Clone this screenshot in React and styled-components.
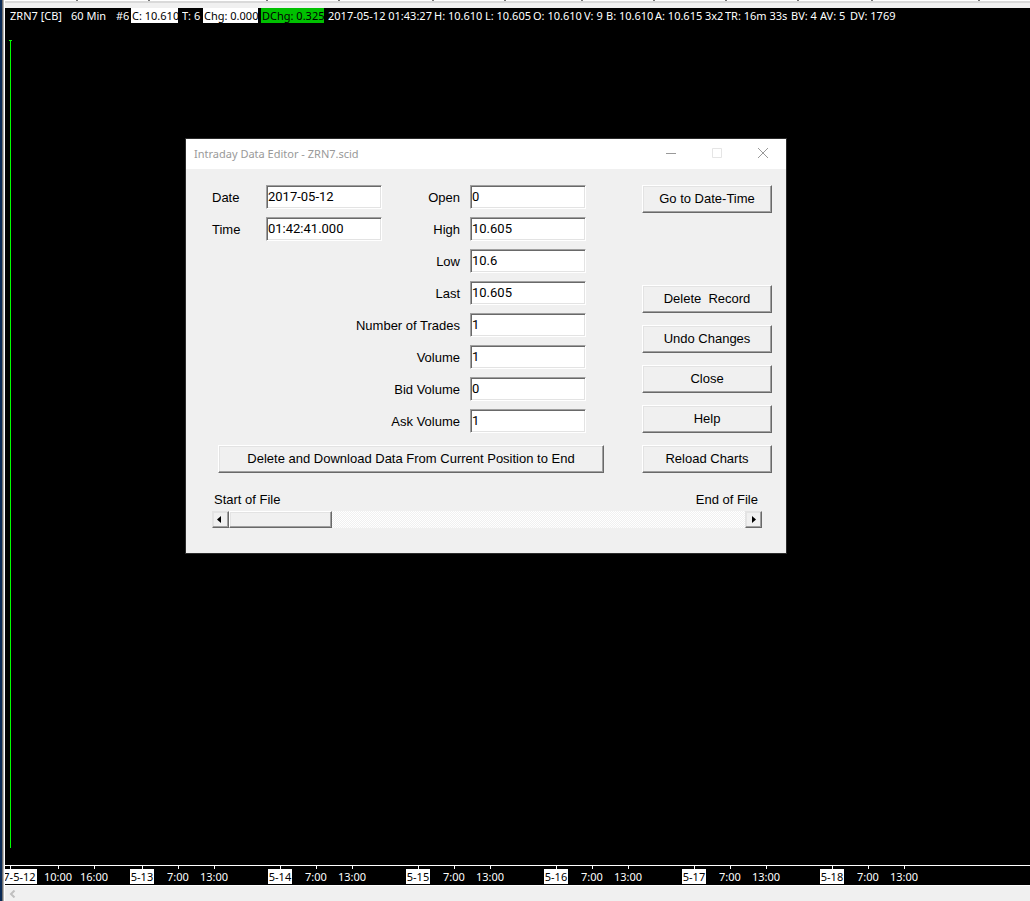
import React from "react";
import styled, { createGlobalStyle, css } from "styled-components";

const GlobalStyle = createGlobalStyle`
  * {
    box-sizing: border-box;
  }

  body {
    margin: 0;
    background: #f0f0f0;
    overflow: hidden;
  }
`;

const uiFont = css`
  font-family: "Noto Sans", "Open Sans", sans-serif;
  font-size: 11px;
`;

const dialogFont = css`
  font-family: "Liberation Sans", Arial, sans-serif;
  font-size: 13px;
`;

const Page = styled.main`
  display: flex;
  min-height: 100vh;
  ${uiFont}
`;

const DesktopEdge = styled.div`
  flex: none;
  width: 4px;
  background: linear-gradient(90deg, #0b2b56 2px, #6f6f6f 2px, #6f6f6f 3px, #b4b4b4 3px);
`;

const ChartWindow = styled.section`
  flex: 1;
  min-width: 0;
  display: flex;
  flex-direction: column;
  border-left: 1px solid #fff;
`;

const ToolbarEdge = styled.div`
  flex: none;
  height: 8px;
  background: linear-gradient(#fff 1px, #d9d9d9 1px, #d9d9d9 3px, #f0f0f0 3px);
`;

const ToolbarMarks = styled.div`
  display: flex;
  height: 1px;
  overflow: hidden;
`;

const ToolbarCell = styled.div`
  flex: none;
  width: ${(p) => p.$width}px;
  border-right: 2px solid #777;
`;

const Chart = styled.div`
  position: relative;
  flex: 1;
  display: flex;
  flex-direction: column;
  background: #000;
  color: #fff;
`;

const QuoteLine = styled.header`
  display: flex;
  height: 15px;
  padding-left: 5px;
  line-height: 15px;
  white-space: pre;
  overflow: hidden;
`;

const Quote = styled.span`
  flex: none;
  width: ${(p) => p.$width}px;
  margin-right: ${(p) => p.$gap || 3}px;
  padding-left: ${(p) => (p.$bg ? 1 : 0)}px;
  overflow: hidden;
  color: ${(p) => (p.$bg ? "#000" : "#fff")};
  background: ${(p) => p.$bg || "transparent"};
`;

const Plot = styled.div`
  flex: 1;
  padding: 17px 4px;
`;

const PriceBar = styled.div`
  width: 3px;
  height: 100%;
  min-height: 100%;
  background: linear-gradient(#00ff00, #00ff00) top / 3px 1px no-repeat,
    linear-gradient(#00ff00, #00ff00) center / 1px 100% no-repeat;
`;

const TimeAxis = styled.footer`
  flex: none;
  display: flex;
  height: 20px;
  border-top: 1px solid #fff;
  overflow: hidden;
`;

const Day = styled.div`
  flex: none;
  display: flex;
  width: ${(p) => (p.$first ? 132 : 138)}px;
  margin-left: ${(p) => (p.$first ? -13 : 0)}px;
`;

const TickCell = styled.div`
  flex: none;
  display: flex;
  flex-direction: column;
  align-items: center;
  width: 36px;
  margin-right: ${(p) => (p.$wide ? 12 : 0)}px;
`;

const Tick = styled.i`
  width: 1px;
  height: 3px;
  background: #fff;
`;

const TickLabel = styled.time`
  padding: 0 1px;
  line-height: 15px;
  white-space: nowrap;
  color: ${(p) => (p.$day ? "#000" : "#fff")};
  background: ${(p) => (p.$day ? "#fff" : "transparent")};
`;

const BottomScroll = styled.div`
  flex: none;
  height: 16px;
  border-top: 1px solid #fff;
  background: #f0f0f0;
`;

const ScrollLeft = styled.button`
  display: flex;
  align-items: center;
  justify-content: center;
  width: 15px;
  height: 15px;
  padding: 0;
  border: 0;
  background: none;
  color: #bfbfbf;
`;

const Dialog = styled.section`
  position: absolute;
  left: 180px;
  top: 130px;
  width: 602px;
  border: 1px solid #2b2b2b;
  background: #f0f0f0;
  color: #000;
  ${dialogFont}
`;

const TitleBar = styled.header`
  display: flex;
  align-items: flex-start;
  justify-content: space-between;
  height: 30px;
  padding-left: 8px;
  background: #fff;
  color: #999;
  ${uiFont}
`;

const Title = styled.h1`
  margin: 0;
  font-size: 11px;
  font-weight: 400;
  line-height: 29px;
`;

const WindowButton = styled.button`
  width: 46px;
  height: 28px;
  padding: 0;
  border: 0;
  background: none;
  color: ${(p) => (p.disabled ? "#e5e5e5" : "#999")};

  svg {
    display: block;
    margin: auto;
  }
`;

const WindowButtons = styled.div`
  display: flex;
`;

const Body = styled.form`
  padding: 16px 14px 25px 26px;
`;

const Columns = styled.div`
  display: flex;
  justify-content: space-between;
`;

const Fields = styled.div`
  display: flex;
`;

const FieldColumn = styled.div`
  display: grid;
  grid-template-columns: ${(p) => p.$labelWidth}px 116px;
  row-gap: 8px;
  align-content: start;
`;

/* right-aligned labels may run out past the left of their column */
const Label = styled.label`
  display: flex;
  justify-content: ${(p) => (p.$right ? "flex-end" : "flex-start")};
  height: 24px;
  padding-right: 10px;
  line-height: 26px;
  white-space: nowrap;
`;

const TextBox = styled.input`
  width: 100%;
  height: 24px;
  padding: 0 1px 2px;
  border: 1px solid;
  border-color: #a0a0a0 #fff #fff #a0a0a0;
  border-radius: 0;
  box-shadow: inset 1px 1px #696969, inset -1px -1px #e3e3e3;
  background: #fff;
  outline: none;
  font-family: Roboto, "Liberation Sans", sans-serif;
  font-size: 13px;
`;

const raised = css`
  border: 1px solid;
  border-color: #fff #696969 #696969 #fff;
  box-shadow: inset -1px -1px #a0a0a0, inset 1px 1px #e3e3e3;
  background: #f0f0f0;
`;

const PushButton = styled.button`
  width: ${(p) => (p.$wide ? "386px" : "100%")};
  height: 28px;
  padding: 0 0 2px;
  white-space: pre;
  color: #000;
  ${dialogFont}
  ${raised}
`;

const Actions = styled.div`
  display: flex;
  flex-direction: column;
  gap: 12px;
  width: 130px;
`;

const WideAction = styled.div`
  padding: 12px 6px 0;
`;

const ActionGap = styled.div`
  height: 48px;
`;

const Ends = styled.div`
  display: flex;
  justify-content: space-between;
  margin-top: 18px;
  padding: 0 14px 0 2px;
  line-height: 17px;
`;

const ScrollBar = styled.div`
  display: flex;
  height: 17px;
  margin: 3px 10px 0 0;
  background: repeating-conic-gradient(#fff 0 25%, #f0f0f0 0 50%) 0 0 / 2px 2px;
`;

const ArrowButton = styled.button`
  display: flex;
  align-items: center;
  justify-content: center;
  width: 17px;
  height: 17px;
  margin-left: ${(p) => (p.$end ? "auto" : 0)};
  padding: ${(p) => (p.$end ? 0 : "0 3px 0 0")};
  color: #000;
  ${raised}
  border-left-color: #e3e3e3;
  border-top-color: #e3e3e3;
`;

const Thumb = styled.div`
  width: 103px;
  ${raised}
`;

const toolbarCells = [73, 72, 118, 72, 94, 72, 77, 72, 72, 72, 74, 107];

const quotes = [
  { text: "ZRN7 [CB]", width: 56, gap: 5 },
  { text: "60 Min", width: 37, gap: 8 },
  { text: "#6", width: 13, gap: 2 },
  { text: "C: 10.610", width: 47, gap: 4, bg: "#fff" },
  { text: "T: 6", width: 19, gap: 2 },
  { text: "Chg: 0.000", width: 55, bg: "#fff" },
  { text: "DChg: 0.325", width: 63, gap: 4, bg: "#00c000" },
  { text: "2017-05-12 01:43:27", width: 104, gap: 2 },
  { text: "H: 10.610", width: 49, gap: 2 },
  { text: "L: 10.605", width: 46, gap: 2 },
  { text: "O: 10.610", width: 49, gap: 2 },
  { text: "V: 9", width: 20, gap: 2 },
  { text: "B: 10.610", width: 48, gap: 1 },
  { text: "A: 10.615", width: 48, gap: 2 },
  { text: "3x2", width: 18, gap: 2 },
  { text: "TR: 16m 33s", width: 64, gap: 2 },
  { text: "BV: 4", width: 27, gap: 2 },
  { text: "AV: 5", width: 28, gap: 2 },
  { text: "DV: 1769", width: 46 },
];

const days = [
  ["2017-5-12", "10:00", "16:00"],
  ["5-13", "7:00", "13:00"],
  ["5-14", "7:00", "13:00"],
  ["5-15", "7:00", "13:00"],
  ["5-16", "7:00", "13:00"],
  ["5-17", "7:00", "13:00"],
  ["5-18", "7:00", "13:00"],
];

const whenFields = [
  ["Date", "2017-05-12"],
  ["Time", "01:42:41.000"],
];

const valueFields = [
  ["Open", "0"],
  ["High", "10.605"],
  ["Low", "10.6"],
  ["Last", "10.605"],
  ["Number of Trades", "1"],
  ["Volume", "1"],
  ["Bid Volume", "0"],
  ["Ask Volume", "1"],
];

const actions = ["Delete  Record", "Undo Changes", "Close", "Help", "Reload Charts"];

function FieldList({ fields, labelWidth, right }) {
  return (
    <FieldColumn $labelWidth={labelWidth}>
      {fields.map(([name, value]) => {
        const id = name.toLowerCase().replace(/ /g, "-");
        return (
          <React.Fragment key={id}>
            <Label htmlFor={id} $right={right}>{name}</Label>
            <TextBox id={id} type="text" defaultValue={value} />
          </React.Fragment>
        );
      })}
    </FieldColumn>
  );
}

function DataEditor() {
  return (
    <Dialog role="dialog" aria-labelledby="editor-title">
      <TitleBar>
        <Title id="editor-title">Intraday Data Editor - ZRN7.scid</Title>
        <WindowButtons>
          <WindowButton aria-label="Minimize">
            <svg width="10" height="10"><path d="M0 5.5h10" stroke="currentColor" /></svg>
          </WindowButton>
          <WindowButton aria-label="Maximize" disabled>
            <svg width="10" height="10"><path d="M.5.5h9v9h-9z" fill="none" stroke="currentColor" /></svg>
          </WindowButton>
          <WindowButton aria-label="Close window">
            <svg width="10" height="10"><path d="M0 0l10 10M10 0L0 10" stroke="currentColor" /></svg>
          </WindowButton>
        </WindowButtons>
      </TitleBar>
      <Body onSubmit={(e) => e.preventDefault()}>
        <Columns>
          <div>
            <Fields>
              <FieldList fields={whenFields} labelWidth={54} />
              <FieldList fields={valueFields} labelWidth={88} right />
            </Fields>
            <WideAction>
              <PushButton type="button" $wide>
                Delete and Download Data From Current Position to End
              </PushButton>
            </WideAction>
          </div>
          <Actions>
            <PushButton type="button">Go to Date-Time</PushButton>
            <ActionGap />
            {actions.map((name) => (
              <PushButton type="button" key={name}>{name}</PushButton>
            ))}
          </Actions>
        </Columns>
        <Ends>
          <span>Start of File</span>
          <span>End of File</span>
        </Ends>
        <ScrollBar>
          <ArrowButton type="button" aria-label="Previous record">
            <svg width="4" height="7"><path d="M4 0v7L0 3.5z" fill="currentColor" /></svg>
          </ArrowButton>
          <Thumb />
          <ArrowButton type="button" aria-label="Next record" $end>
            <svg width="4" height="7"><path d="M0 0v7l4-3.5z" fill="currentColor" /></svg>
          </ArrowButton>
        </ScrollBar>
      </Body>
    </Dialog>
  );
}

export default function App() {
  return (
    <Page>
      <GlobalStyle />
      <DesktopEdge />
      <ChartWindow>
        <ToolbarEdge>
          <ToolbarMarks>
            {toolbarCells.map((width, i) => <ToolbarCell key={i} $width={width} />)}
          </ToolbarMarks>
        </ToolbarEdge>
        <Chart>
          <QuoteLine>
            {quotes.map((q) => (
              <Quote key={q.text} $width={q.width} $gap={q.gap} $bg={q.bg}>{q.text}</Quote>
            ))}
          </QuoteLine>
          <Plot>
            <PriceBar />
          </Plot>
          <TimeAxis>
            {days.map((labels, i) => (
              <Day key={labels[0]} $first={i === 0}>
                {labels.map((label, j) => (
                  <TickCell key={label} $wide={i === 0 && j === 0}>
                    <Tick />
                    <TickLabel $day={j === 0}>{label}</TickLabel>
                  </TickCell>
                ))}
              </Day>
            ))}
          </TimeAxis>
          <DataEditor />
        </Chart>
        <BottomScroll>
          <ScrollLeft aria-label="Scroll left">
            <svg width="7" height="8"><path d="M5.5.5L2 4l3.5 3.5" fill="none" stroke="currentColor" strokeWidth="2" /></svg>
          </ScrollLeft>
        </BottomScroll>
      </ChartWindow>
    </Page>
  );
}
